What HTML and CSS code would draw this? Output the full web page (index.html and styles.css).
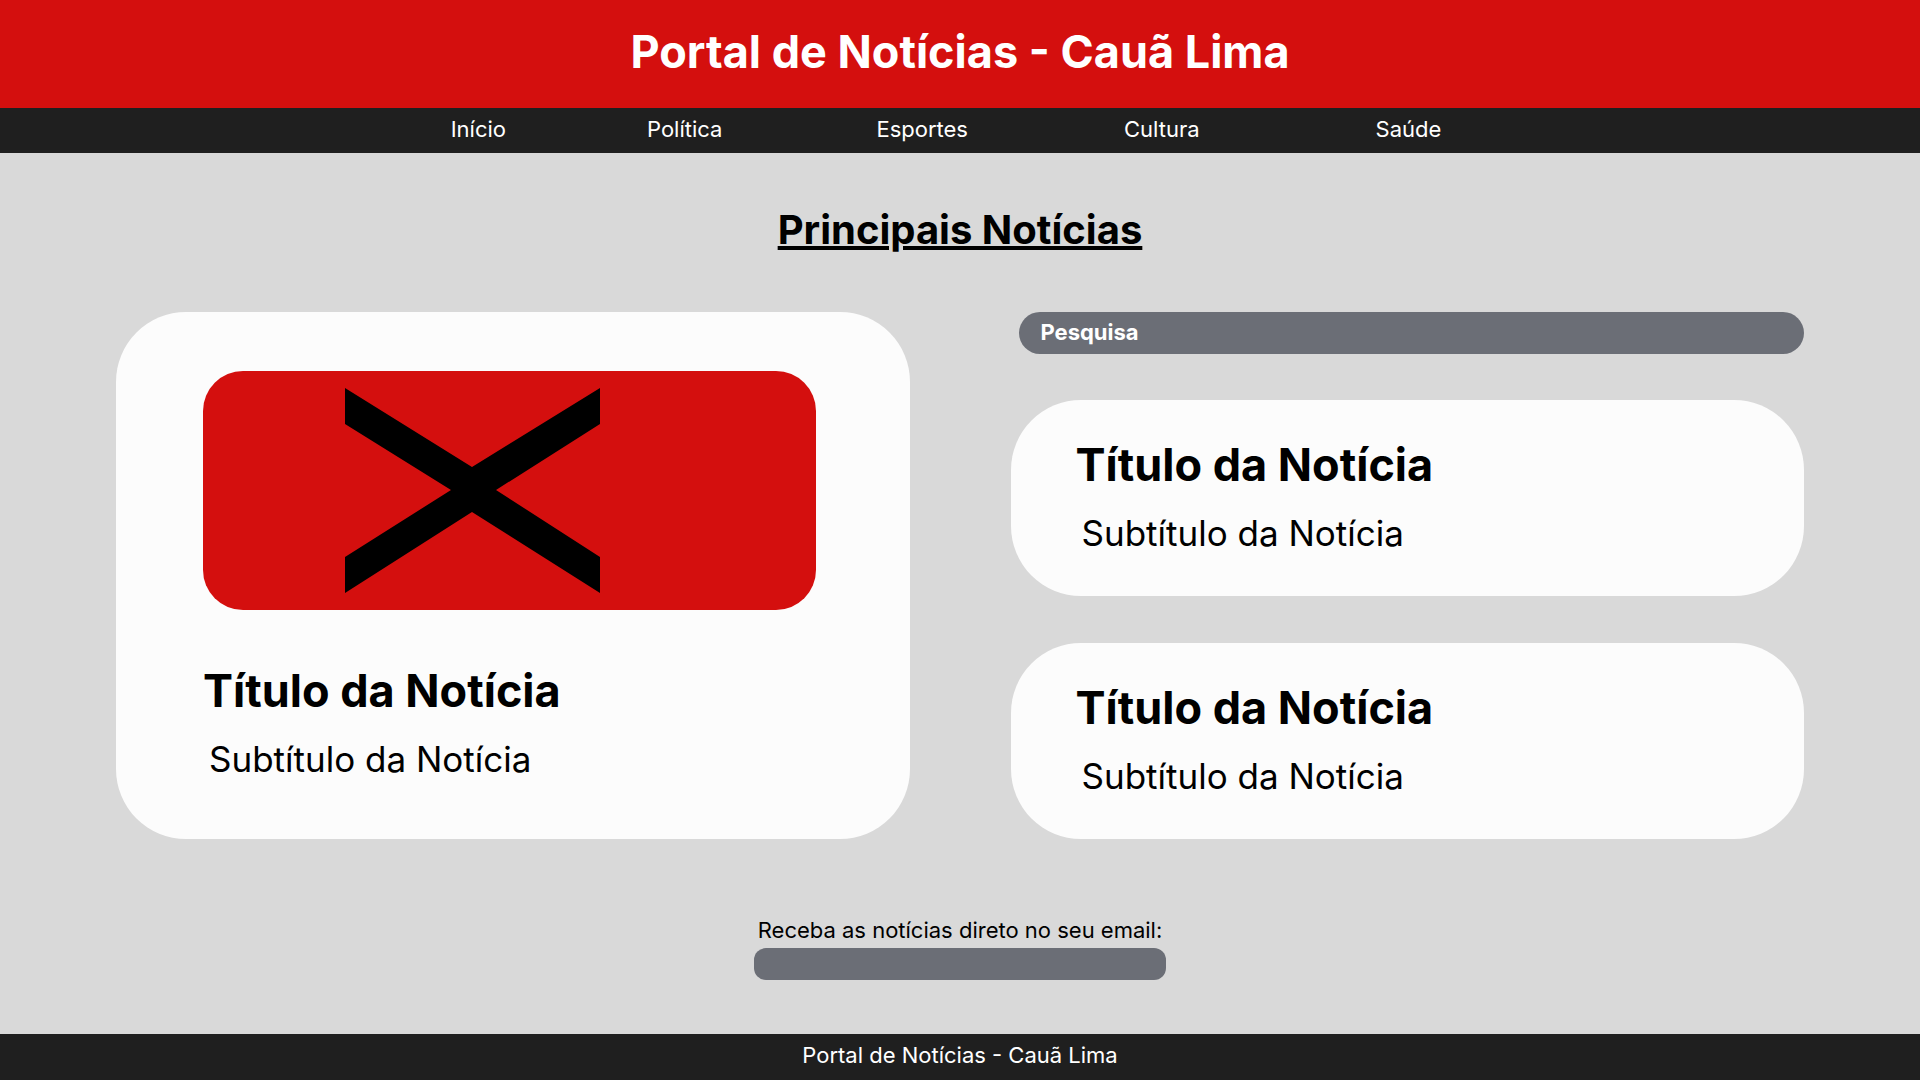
FILE: index.html
```html
<!DOCTYPE html>
<html lang="pt-BR">
<head>
<meta charset="utf-8">
<title>Portal de Notícias - Cauã Lima</title>
<link rel="stylesheet" href="styles.css">
</head>
<body>
<header class="site-header">
  <h1 class="site-title">Portal de Notícias - Cauã Lima</h1>
</header>
<nav class="site-nav">
  <ul class="nav-list">
    <li class="nav-item"><a href="#">Início</a></li>
    <li class="nav-item"><a href="#">Política</a></li>
    <li class="nav-item"><a href="#">Esportes</a></li>
    <li class="nav-item"><a href="#">Cultura</a></li>
    <li class="nav-item"><a href="#">Saúde</a></li>
  </ul>
</nav>
<main class="main">
  <h2 class="section-title">Principais Notícias</h2>
  <section class="news-grid">
    <article class="card card-main">
      <div class="card-image">
        <svg class="x-mark" width="255" height="205" viewBox="0 0 255 205" aria-hidden="true">
          <polygon points="0,0 127,79 255,0 255,36 151,102 255,169 255,205 127,124 0,205 0,169 106,102 0,36" fill="#000"/>
        </svg>
      </div>
      <h3 class="card-title card-main-title">Título da Notícia</h3>
      <p class="card-subtitle">Subtítulo da Notícia</p>
    </article>
    <div class="side-column">
      <div class="search-bar">Pesquisa</div>
      <article class="card card-side">
        <h3 class="card-title">Título da Notícia</h3>
        <p class="card-subtitle">Subtítulo da Notícia</p>
      </article>
      <article class="card card-side">
        <h3 class="card-title">Título da Notícia</h3>
        <p class="card-subtitle">Subtítulo da Notícia</p>
      </article>
    </div>
  </section>
  <section class="newsletter">
    <label class="newsletter-label" for="email">Receba as notícias direto no seu email:</label>
    <input class="newsletter-input" id="email" type="email">
  </section>
</main>
<footer class="site-footer">Portal de Notícias - Cauã Lima</footer>
</body>
</html>
```
FILE: styles.css
```css
* { box-sizing: border-box; }

html, body {
  margin: 0;
  padding: 0;
}

body {
  font-family: Inter, "Noto Sans", "Liberation Sans", sans-serif;
  background: #d9d9d9;
  color: #000;
  min-height: 100vh;
  display: flex;
  flex-direction: column;
}

.site-header {
  background: #d40f0e;
  height: 108px;
  display: flex;
  align-items: center;
  justify-content: center;
  padding-bottom: 6px;
}

.site-title {
  margin: 0;
  color: #fff;
  font-size: 45px;
  font-weight: 700;
  line-height: normal;
}

.site-nav {
  background: #1f1f1f;
  height: 45px;
  display: flex;
  align-items: center;
}

.nav-list {
  list-style: none;
  margin: 0;
  padding: 0 28px 4px 0;
  width: 100%;
  display: flex;
  justify-content: center;
}

.nav-item a {
  color: #fff;
  text-decoration: none;
  font-size: 22px;
  line-height: normal;
}

.nav-item:nth-child(2) { margin-left: 141px; }
.nav-item:nth-child(3) { margin-left: 154px; }
.nav-item:nth-child(4) { margin-left: 156px; }
.nav-item:nth-child(5) { margin-left: 176px; }

.main {
  flex: 1;
  padding-top: 52px;
}

.section-title {
  margin: 0 0 58px;
  text-align: center;
  font-size: 40px;
  font-weight: 700;
  line-height: normal;
  text-decoration: underline;
}

.news-grid {
  display: grid;
  grid-template-columns: 1fr 1fr;
  column-gap: 101px;
  padding: 0 116px;
}

.card {
  background: #fcfcfc;
  border-radius: 70px;
}

.card-main {
  height: 527px;
  padding: 59px 0 0 87px;
}

.card-image {
  width: 613px;
  height: 239px;
  background: #d40f0e;
  border-radius: 40px;
  padding: 17px 0 0 142px;
}

.x-mark { display: block; }

.card-title {
  margin: 0;
  font-size: 45px;
  font-weight: 700;
  line-height: normal;
}

.card-main-title {
  margin-top: 53px;
}

.card-subtitle {
  margin: 20px 0 0;
  padding-left: 6px;
  font-size: 35px;
  font-weight: 400;
  line-height: normal;
}

.side-column {
  display: flex;
  flex-direction: column;
}

.search-bar {
  height: 42px;
  border-radius: 21px;
  background: #6b6e76;
  color: #fff;
  font-size: 22px;
  font-weight: 700;
  display: flex;
  align-items: center;
  padding: 0 0 2px 22px;
  margin-left: 8px;
}

.card-side {
  height: 196px;
  padding: 37px 0 0 65px;
  margin-top: 46px;
}

.card-side + .card-side { margin-top: 47px; }

.newsletter {
  display: flex;
  flex-direction: column;
  align-items: center;
  margin-top: 78px;
  padding-bottom: 53px;
}

.newsletter-label {
  font-size: 22px;
  line-height: normal;
}

.newsletter-input {
  margin-top: 5px;
  width: 412px;
  height: 32px;
  border: none;
  border-radius: 12px;
  background: #6b6e76;
  padding: 0 12px;
  font: inherit;
  color: #fff;
}

.site-footer {
  background: #1f1f1f;
  color: #fff;
  height: 46px;
  display: flex;
  align-items: center;
  justify-content: center;
  font-size: 22px;
  padding-bottom: 4px;
}
```
